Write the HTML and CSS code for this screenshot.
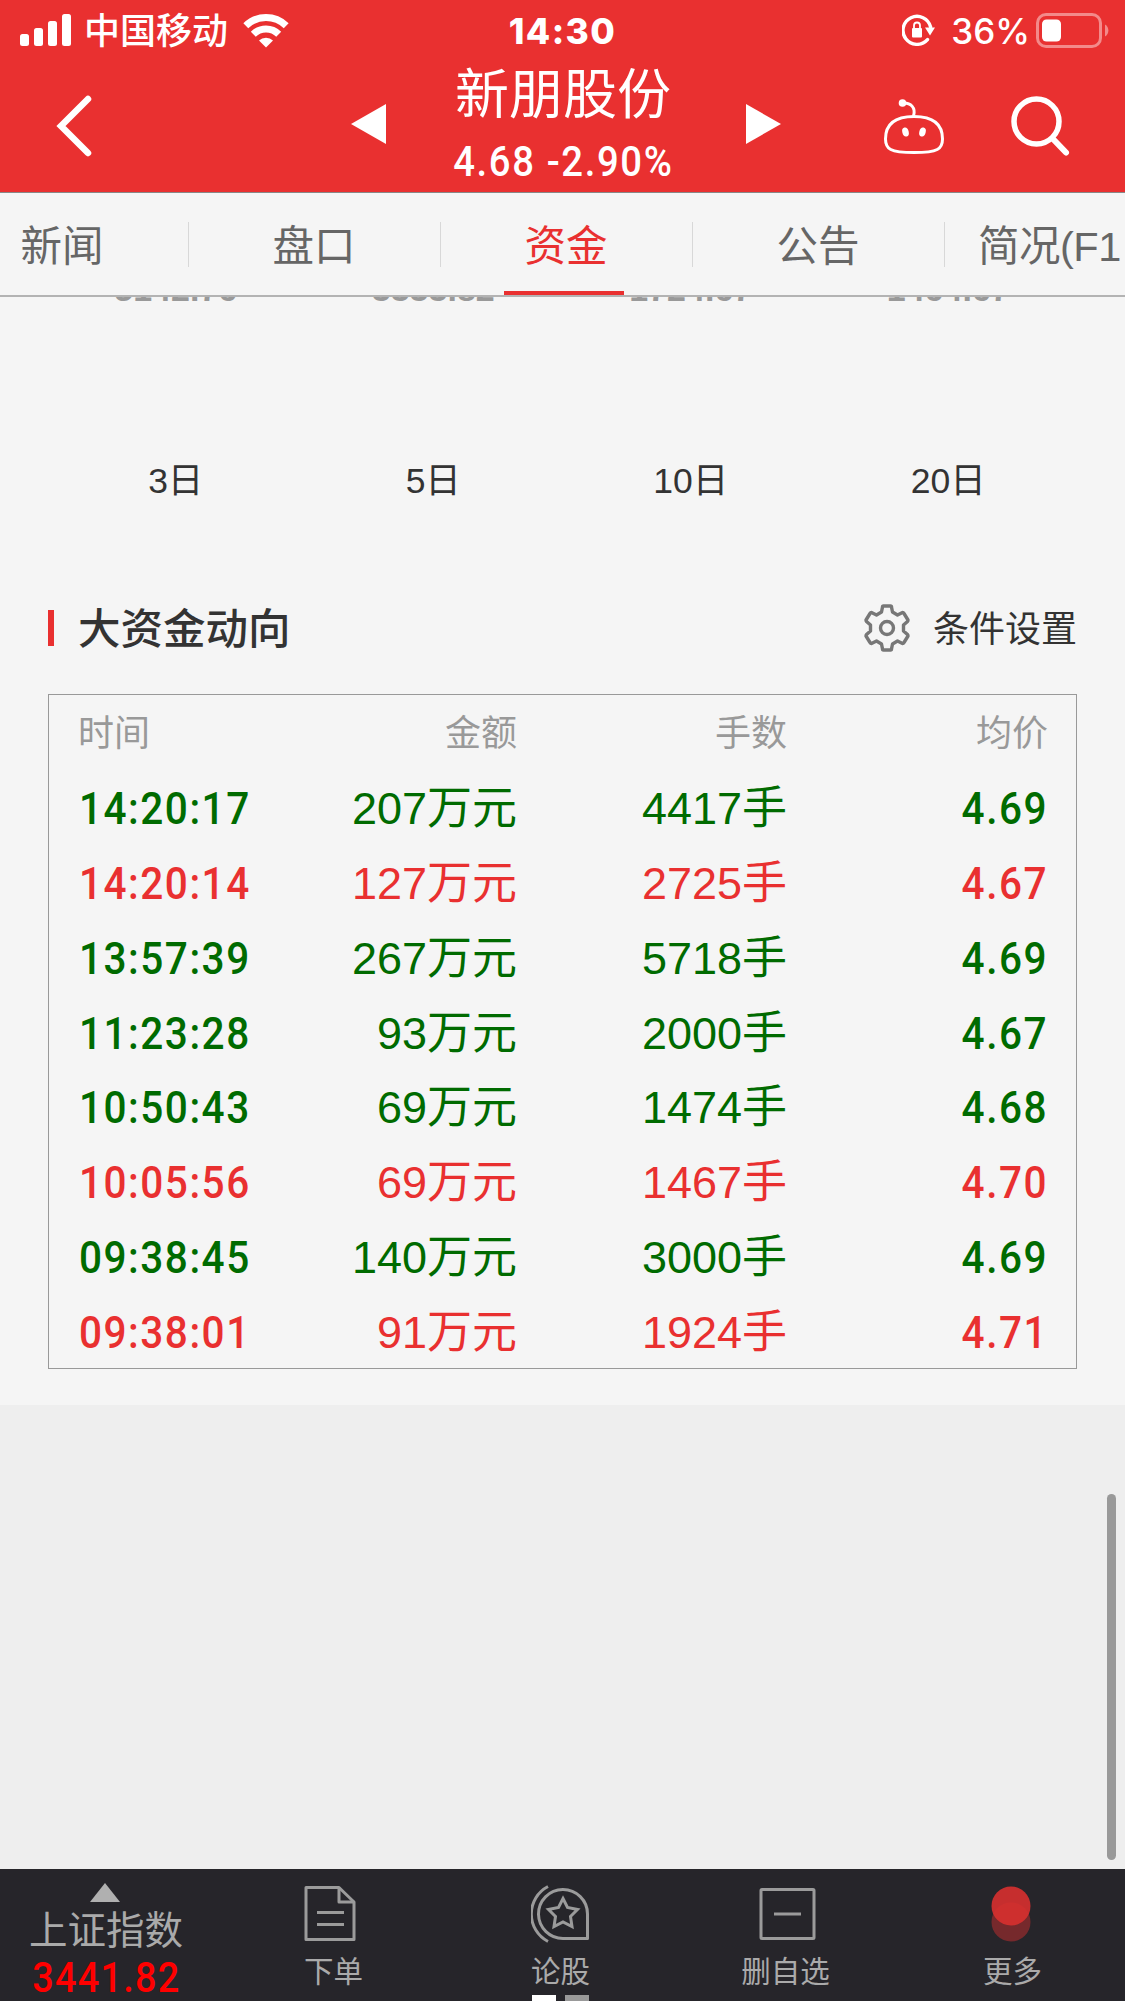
FILE: index.html
```
<!DOCTYPE html>
<html lang="zh-CN">
<head>
    <meta charset="UTF-8">
    <meta name="viewport" content="width=device-width, initial-scale=1.0">
    <title>新朋股份</title>
    <link rel="stylesheet" href="styles.css">
</head>
<body>

<header class="header">
    <div class="status">
        <div class="status-left">
            <svg width="52" height="34" viewBox="0 0 52 34" fill="#fff">
                <rect x="0" y="21" width="9" height="12" rx="2.5"/>
                <rect x="14" y="15" width="9" height="18" rx="2.5"/>
                <rect x="28" y="8" width="9" height="25" rx="2.5"/>
                <rect x="42" y="1" width="9" height="32" rx="2.5"/>
            </svg>
            <span class="carrier">中国移动</span>
            <svg class="wifi" width="46" height="35" viewBox="0 0 46 35">
                <g fill="none" stroke="#fff" stroke-width="7">
                    <path d="M2.8 12.7A29 29 0 0 1 43.2 12.7"/>
                    <path d="M10.3 21.2A18 18 0 0 1 35.7 21.2"/>
                </g>
                <path fill="#fff" d="M23 34.5L16 27.6A10 10 0 0 1 30 27.6Z"/>
            </svg>
        </div>
        <div class="clock">14:30</div>
        <div class="status-right">
            <svg width="34" height="32" viewBox="0 0 34 32">
                <path d="M25.5 25.6A14 14 0 1 1 28.6 13" fill="none" stroke="#fff" stroke-width="3.4" stroke-linecap="round"/>
                <path d="M23 13.5h10l-5 8z" fill="#fff"/>
                <rect x="10" y="14" width="10" height="9.5" rx="1" fill="#fff"/>
                <path d="M12 14v-2.5a3 3 0 0 1 6 0V14" fill="none" stroke="#fff" stroke-width="1.8"/>
            </svg>
            <span class="percent">36%</span>
            <svg width="75" height="35" viewBox="0 0 75 35">
                <rect x="1.5" y="1.5" width="63" height="32" rx="8.5" fill="none" stroke="#f38a8a" stroke-width="3"/>
                <rect x="6" y="6.5" width="19" height="22" rx="4.5" fill="#fff"/>
                <path d="M69 11.5a7 7 0 0 1 0 12z" fill="#f38a8a"/>
            </svg>
        </div>
    </div>

    <div class="titlebar">
        <svg class="back" width="40" height="66" viewBox="0 0 40 66">
            <path d="M33 6L6 33L33 60" fill="none" stroke="#fff" stroke-width="6.5" stroke-linecap="round"/>
        </svg>
        <svg class="prev" width="36" height="40" viewBox="0 0 36 40"><path d="M0 20L35 0V40Z" fill="#fff"/></svg>
        <div class="stock">
            <div class="stock-name">新朋股份</div>
            <div class="stock-price"><span class="din">4.68 -2.90%</span></div>
        </div>
        <svg class="next" width="36" height="40" viewBox="0 0 36 40"><path d="M35 20L0 0V40Z" fill="#fff"/></svg>
        <svg class="robot" width="62" height="56" viewBox="0 0 62 56">
            <g fill="none" stroke="#fff" stroke-width="3">
                <path d="M31 18.5C48 18.5 59.5 25 59.5 41C59.5 51 55 54.5 31 54.5C7 54.5 2.5 51 2.5 41C2.5 25 14 18.5 31 18.5Z"/>
                <path d="M19 5C28 4 33 10 30.5 18"/>
            </g>
            <circle cx="19.5" cy="5" r="3.8" fill="#fff"/>
            <ellipse cx="22.5" cy="34" rx="3.2" ry="4.6" transform="rotate(-15 22.5 34)" fill="#fff"/>
            <ellipse cx="39.5" cy="34" rx="3.2" ry="4.6" transform="rotate(15 39.5 34)" fill="#fff"/>
        </svg>
        <svg class="search" width="62" height="62" viewBox="0 0 62 62" fill="none" stroke="#fff" stroke-linecap="round">
            <circle cx="26.5" cy="26.5" r="22.5" stroke-width="5.5"/>
            <path d="M44 45L56 57.5" stroke-width="6"/>
        </svg>
    </div>
</header>

<nav class="tabs">
    <a class="tab">新闻</a>
    <a class="tab">盘口</a>
    <a class="tab active">资金</a>
    <a class="tab">公告</a>
    <a class="tab last">简况(F1</a>
</nav>

<main class="content">
    <div class="grid-row values">
        <span>5142.76</span>
        <span>3333.82</span>
        <span>1724.67</span>
        <span>1464.67</span>
    </div>
    <div class="grid-row days">
        <span>3日</span>
        <span>5日</span>
        <span>10日</span>
        <span>20日</span>
    </div>

    <div class="section-head">
        <h2>大资金动向</h2>
        <div class="settings">
            <svg width="48" height="48" viewBox="0 0 48 48" fill="none" stroke="#777" stroke-width="3.4" stroke-linejoin="round">
                <path d="M19.5 3Q19.5 2 20.5 2H27.5Q28.5 2 28.5 3L29.5 8L34.5 11L39.5 8.5Q40.5 8.5 41 9.5L45 16Q45 17 44.5 17.5L40.5 21V27L44.5 30.5Q45 31 45 32L41 38.5Q40.5 39.5 39.5 39.5L34.5 37L29.5 40L28.5 45Q28.5 46 27.5 46H20.5Q19.5 46 19.5 45L18.5 40L13.5 37L8.5 39.5Q7.5 39.5 7 38.5L3 32Q3 31 3.5 30.5L7.5 27V21L3.5 17.5Q3 17 3 16L7 9.5Q7.5 8.5 8.5 8.5L13.5 11L18.5 8Z"/>
                <circle cx="24" cy="24" r="6.5"/>
            </svg>
            <span>条件设置</span>
        </div>
    </div>

    <table class="flow">
        <thead>
            <tr><th>时间</th><th>金额</th><th>手数</th><th>均价</th></tr>
        </thead>
        <tbody>
            <tr class="down"><td><span class="din">14:20:17</span></td><td>207万元</td><td>4417手</td><td><span class="din">4.69</span></td></tr>
            <tr class="up"><td><span class="din">14:20:14</span></td><td>127万元</td><td>2725手</td><td><span class="din">4.67</span></td></tr>
            <tr class="down"><td><span class="din">13:57:39</span></td><td>267万元</td><td>5718手</td><td><span class="din">4.69</span></td></tr>
            <tr class="down"><td><span class="din">11:23:28</span></td><td>93万元</td><td>2000手</td><td><span class="din">4.67</span></td></tr>
            <tr class="down"><td><span class="din">10:50:43</span></td><td>69万元</td><td>1474手</td><td><span class="din">4.68</span></td></tr>
            <tr class="up"><td><span class="din">10:05:56</span></td><td>69万元</td><td>1467手</td><td><span class="din">4.70</span></td></tr>
            <tr class="down"><td><span class="din">09:38:45</span></td><td>140万元</td><td>3000手</td><td><span class="din">4.69</span></td></tr>
            <tr class="up"><td><span class="din">09:38:01</span></td><td>91万元</td><td>1924手</td><td><span class="din">4.71</span></td></tr>
        </tbody>
    </table>
</main>

<div class="blank">
    <div class="scrollbar"></div>
</div>

<footer class="bottom">
    <div class="index">
        <svg width="30" height="19" viewBox="0 0 30 19"><path d="M15 0L30 19H0Z" fill="#b0b0b0"/></svg>
        <div class="index-name">上证指数</div>
        <div class="index-value"><span class="din">3441.82</span></div>
    </div>
    <div class="item">
        <svg width="60" height="60" viewBox="0 0 60 60" fill="none" stroke="#9b9b9b" stroke-width="3" stroke-linejoin="round">
            <path d="M2 3.5H35L50 18V55.5H2Z"/>
            <path d="M35 3.5V18H50"/>
            <path d="M13 28.5H40M13 40.5H40"/>
        </svg>
        <span>下单</span>
    </div>
    <div class="item">
        <svg width="60" height="60" viewBox="0 0 60 60" fill="none" stroke="#9b9b9b" stroke-width="3">
            <path d="M56.5 54.5H32.5A24.5 24.5 0 1 1 56.5 30Z" stroke-linejoin="round"/>
            <path d="M17 2.5A31 31 0 0 0 17 57.5"/>
            <path d="M32 14.5L36.5 23.5L46.5 25.5L39.5 32.5L41 42.5L32 38L23 42.5L24.5 32.5L17.5 25.5L27.5 23.5Z"/>
        </svg>
        <span>论股</span>
        <div class="pager"><i class="on"></i><i></i></div>
    </div>
    <div class="item">
        <svg width="60" height="60" viewBox="0 0 60 60" fill="none" stroke="#9b9b9b" stroke-width="3" stroke-linejoin="round">
            <rect x="3" y="5.5" width="53" height="49" rx="1"/>
            <path d="M16 30H43"/>
        </svg>
        <span>删自选</span>
    </div>
    <div class="item">
        <svg width="60" height="60" viewBox="0 0 60 60">
            <circle cx="26" cy="38" r="19.5" fill="#76292c"/>
            <circle cx="26" cy="22" r="19.5" fill="#d8302f" fill-opacity=".9"/>
        </svg>
        <span>更多</span>
    </div>
</footer>

</body>
</html>
```
FILE: styles.css
```
* {
    box-sizing: border-box;
}
body {
    margin: 0;
    width: 1125px;
    height: 2001px;
    overflow: hidden;
    display: flex;
    flex-direction: column;
    background-color: #eeeeee;
    font-family: "Liberation Sans", "Noto Sans CJK SC", sans-serif;
    color: #333;
}
svg {
    display: block;
    flex: none;
}
/* narrow figures used for times and prices */
.din {
    display: inline-block;
    font-family: Roboto, sans-serif;
    font-weight: 500;
    letter-spacing: 1.7px;
    transform: scaleX(0.9);
    transform-origin: left center;
    white-space: nowrap;
}

.header {
    height: 193px;
    flex: none;
    background-color: #e93030;
    border-bottom: 1px solid #888;
    color: #fff;
}
.status {
    height: 60px;
    padding: 0 15px 0 20px;
    display: grid;
    grid-template-columns: 1fr auto 1fr;
}
.status-left, .status-right {
    display: flex;
    align-items: center;
    height: 60px;
}
.carrier {
    margin-left: 12px;
    padding-top: 3px;
    font-size: 36px;
    font-weight: 500;
    line-height: 60px;
}
.wifi {
    margin-left: 15px;
}
.clock {
    margin-left: -5px;
    font-family: Inter, sans-serif;
    font-weight: 800;
    font-size: 35.5px;
    line-height: 63px;
    letter-spacing: 1.4px;
}
.status-right {
    justify-content: flex-end;
    margin-right: -1px;
}
.percent {
    margin: 0 6px 0 15px;
    padding-top: 2px;
    font-family: Inter, sans-serif;
    font-weight: 500;
    font-size: 35px;
}
.titlebar {
    height: 132px;
    display: flex;
    align-items: flex-start;
}
.back {
    margin: 33px 0 0 55px;
}
.prev {
    margin: 44px 0 0 256px;
}
.stock {
    width: 359px;
    padding-right: 7px;
    text-align: center;
}
.stock-name {
    padding-top: 2px;
    font-size: 54px;
    line-height: 66px;
}
.stock-price {
    font-size: 42.5px;
    line-height: 42px;
    margin-top: 13px;
}
.stock-price .din {
    letter-spacing: 1.8px;
    transform-origin: center;
}
.next {
    margin-top: 44px;
}
.robot {
    margin: 38px 0 0 101px;
}
.search {
    margin: 35px 0 0 65px;
}

.tabs {
    height: 104px;
    flex: none;
    margin-left: -64px;
    width: 1189px;
    overflow: hidden;
    display: flex;
    background-color: #f5f5f5;
    border-bottom: 2px solid #b3b3b3;
}
.tab {
    width: 252px;
    flex: none;
    display: flex;
    justify-content: center;
    position: relative;
    font-size: 41.5px;
    line-height: 108px;
    color: #666;
}
.tab.last {
    width: 181px;
    justify-content: flex-start;
    padding-left: 34px;
    letter-spacing: -0.5px;
}
.tab:not(.last)::after {
    content: "";
    position: absolute;
    right: -1px;
    top: 29px;
    width: 1px;
    height: 45px;
    background-color: #d8d8d8;
}
.tab.active {
    color: #e93030;
}
.tab.active::before {
    content: "";
    position: absolute;
    left: 64px;
    bottom: 0;
    width: 120px;
    height: 4px;
    background-color: #e93030;
}

.content {
    height: 1108px;
    flex: none;
    padding: 0 48px;
    overflow: hidden;
    background-color: #f5f5f5;
}
.grid-row {
    display: grid;
    grid-template-columns: repeat(4, 1fr);
    margin-left: -1px;
    text-align: center;
}
.values {
    margin-top: -28px;
    font-size: 34px;
    font-weight: 700;
    line-height: 40px;
    color: #999;
}
.days {
    margin-top: 148px;
    font-size: 35.5px;
    line-height: 48px;
}
.section-head {
    display: flex;
    justify-content: space-between;
    align-items: center;
    height: 60px;
    margin-top: 93px;
}
.section-head h2 {
    height: 36px;
    margin: 0;
    padding-left: 24px;
    border-left: 6px solid #e93030;
    font-size: 42.5px;
    line-height: 39px;
    font-weight: 500;
}
.settings {
    display: flex;
    align-items: center;
    gap: 22px;
    font-size: 36px;
}
.settings svg {
    margin-left: -1px;
}
.settings span {
    padding-bottom: 5px;
}

.flow {
    width: 1029px;
    height: 675px;
    margin-top: 36px;
    border: 1px solid #999;
    border-spacing: 0;
    table-layout: fixed;
}
.flow th, .flow td {
    height: 74.8px;
    padding: 3px 0 0;
    text-align: right;
    font-size: 45px;
    line-height: 71px;
    font-weight: 400;
}
.flow th {
    font-size: 36px;
    color: #999;
}
.flow th:first-child, .flow td:first-child {
    width: 200px;
    padding-left: 30px;
    text-align: left;
}
.flow th:first-child {
    padding-left: 29px;
}
.flow th:nth-child(2) {
    width: 268px;
}
.flow th:nth-child(3) {
    width: 270px;
}
.flow th:last-child, .flow td:last-child {
    padding-right: 28px;
}
.flow td:last-child .din {
    transform-origin: right center;
}
.down {
    color: #006b00;
}
.up {
    color: #e93030;
}

.blank {
    flex: 1;
    display: flex;
    justify-content: flex-end;
    padding: 89px 9px 9px 0;
}
.scrollbar {
    width: 9px;
    border-radius: 5px;
    background-color: #999;
}

.bottom {
    height: 132px;
    flex: none;
    display: grid;
    grid-template-columns: 220px repeat(4, 227px);
    background-color: #26252a;
    color: #aaa;
}
.index {
    display: flex;
    flex-direction: column;
    align-items: center;
    padding: 14px 10px 0 0;
}
.index-name {
    margin: 3px 0 0 2px;
    font-size: 38.5px;
    line-height: 52px;
}
.index-value {
    margin: -1px 0 0 3px;
    font-size: 42px;
    line-height: 44px;
    color: #f00;
}
.index-value .din {
    letter-spacing: 1.4px;
    transform-origin: center;
}
.item {
    display: flex;
    flex-direction: column;
    align-items: center;
    position: relative;
    padding-top: 15px;
}
.item span {
    font-size: 29.5px;
    line-height: 40px;
    margin-top: 8px;
}
.item:nth-child(n+4) span {
    margin-left: -4px;
}
.pager {
    position: absolute;
    bottom: 0;
    display: flex;
    gap: 9px;
}
.pager i {
    width: 24px;
    height: 6px;
    background-color: #999;
}
.pager .on {
    background-color: #fff;
}
```
